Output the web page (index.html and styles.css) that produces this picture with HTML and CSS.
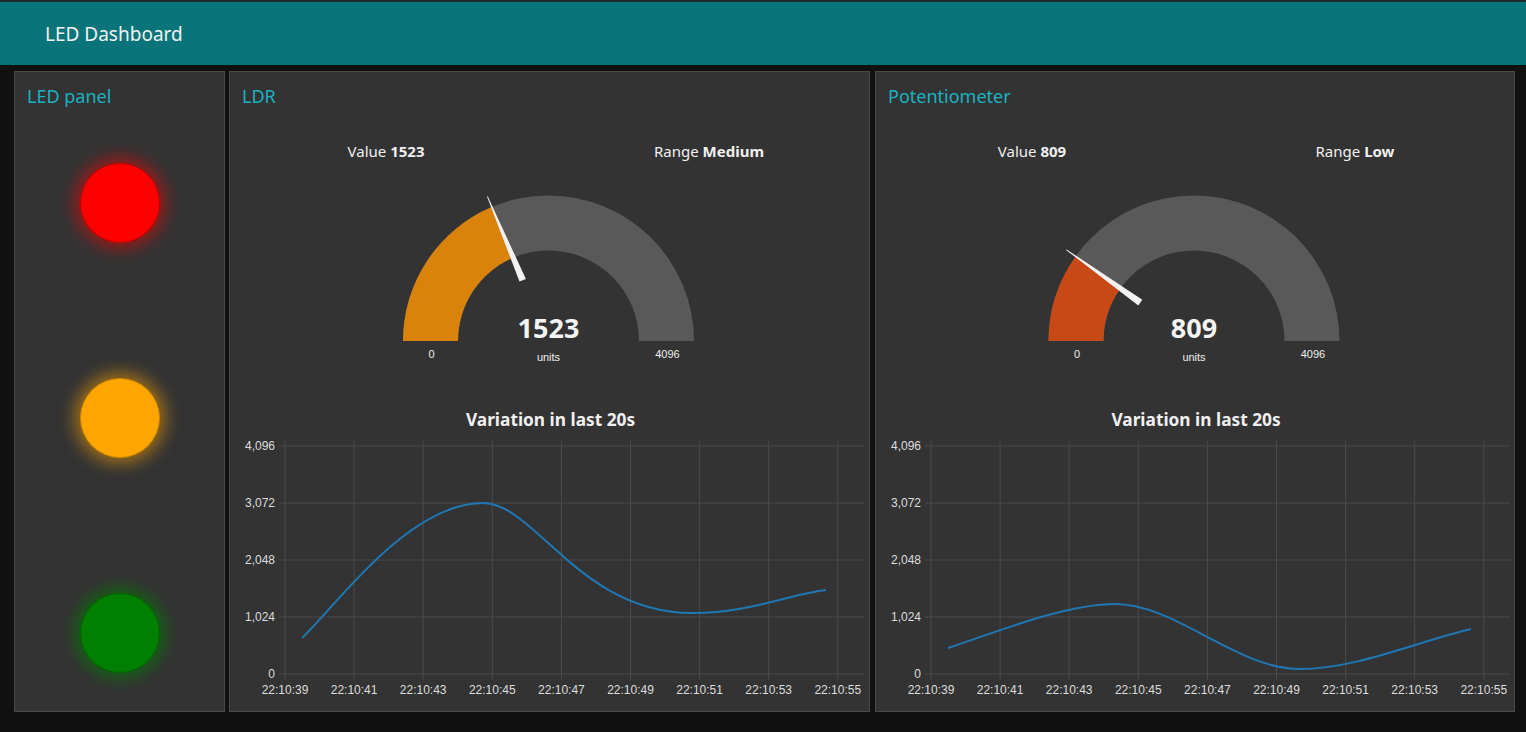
FILE: index.html
```html
<!DOCTYPE html>
<html>
<head>
<meta charset="utf-8">
<title>LED Dashboard</title>
<link rel="stylesheet" href="styles.css">
</head>
<body>
<header class="topbar"><span class="topbar-title">LED Dashboard</span></header>
<main class="board">
  <section class="card card-led">
    <h2 class="card-title">LED panel</h2>
    <div class="leds">
      <div class="led led-red"></div>
      <div class="led led-amber"></div>
      <div class="led led-green"></div>
    </div>
  </section>

  <section class="card card-ldr">
    <h2 class="card-title">LDR</h2>
    <div class="readouts">
      <div class="readout">Value <b>1523</b></div>
      <div class="readout">Range <b>Medium</b></div>
    </div>
    <svg class="gauge" width="639" height="206" viewBox="0 0 639 206">
      <g transform="translate(0.5,0)">
      <path class="g-bg" d="M172.5,177 A145.5,145.5 0 0 1 463.5,177 L408.5,177 A90.5,90.5 0 0 0 227.5,177 Z"/>
      <path class="g-fill-orange" d="M172.5,177 A145.5,145.5 0 0 1 261.15,43.07 L282.64,93.7 A90.5,90.5 0 0 0 227.5,177 Z"/>
      <polygon class="g-needle" points="256.5,32.4 257.2,32.2 295.4,114.9 289,117.6"/>
      <text class="g-value" x="318" y="174">1523</text>
      <text class="g-units" x="318" y="197">units</text>
      <text class="g-lim" x="201" y="194">0</text>
      <text class="g-lim" x="437" y="194">4096</text>
      </g>
    </svg>
    <h3 class="chart-title">Variation in last 20s</h3>
    <svg class="chart" width="639" height="280" viewBox="0 0 639 280">
      <g class="grid">
        <line x1="49" y1="15" x2="634" y2="15"/>
        <line x1="49" y1="72" x2="634" y2="72"/>
        <line x1="49" y1="129" x2="634" y2="129"/>
        <line x1="49" y1="186" x2="634" y2="186"/>
        <line x1="49" y1="243" x2="634" y2="243"/>
        <line x1="55" y1="10" x2="55" y2="249"/>
        <line x1="124.1" y1="10" x2="124.1" y2="249"/>
        <line x1="193.2" y1="10" x2="193.2" y2="249"/>
        <line x1="262.3" y1="10" x2="262.3" y2="249"/>
        <line x1="331.4" y1="10" x2="331.4" y2="249"/>
        <line x1="400.5" y1="10" x2="400.5" y2="249"/>
        <line x1="469.6" y1="10" x2="469.6" y2="249"/>
        <line x1="538.7" y1="10" x2="538.7" y2="249"/>
        <line x1="607.8" y1="10" x2="607.8" y2="249"/>
      </g>
      <g class="ylab">
        <text x="45" y="19">4,096</text>
        <text x="45" y="76">3,072</text>
        <text x="45" y="133">2,048</text>
        <text x="45" y="190">1,024</text>
        <text x="45" y="247">0</text>
      </g>
      <g class="xlab">
        <text x="55" y="263">22:10:39</text>
        <text x="124.1" y="263">22:10:41</text>
        <text x="193.2" y="263">22:10:43</text>
        <text x="262.3" y="263">22:10:45</text>
        <text x="331.4" y="263">22:10:47</text>
        <text x="400.5" y="263">22:10:49</text>
        <text x="469.6" y="263">22:10:51</text>
        <text x="538.7" y="263">22:10:53</text>
        <text x="607.8" y="263">22:10:55</text>
      </g>
      <path class="series" d="M72,207 C110,170 180,72 253,72 C305,72 350,182 462,182 C520,182 560,163 596,159"/>
    </svg>
  </section>

  <section class="card card-pot">
    <h2 class="card-title">Potentiometer</h2>
    <div class="readouts">
      <div class="readout">Value <b>809</b></div>
      <div class="readout">Range <b>Low</b></div>
    </div>
    <svg class="gauge" width="638" height="206" viewBox="0 0 638 206">
      <path class="g-bg" d="M172.5,177 A145.5,145.5 0 0 1 463.5,177 L408.5,177 A90.5,90.5 0 0 0 227.5,177 Z"/>
      <path class="g-fill-red" d="M172.5,177 A145.5,145.5 0 0 1 199.62,92.41 L244.37,124.38 A90.5,90.5 0 0 0 227.5,177 Z"/>
      <polygon class="g-needle" points="190,85.9 190.6,85.4 266.3,135.75 262.3,141.45"/>
      <text class="g-value" x="318" y="174">809</text>
      <text class="g-units" x="318" y="197">units</text>
      <text class="g-lim" x="201" y="194">0</text>
      <text class="g-lim" x="437" y="194">4096</text>
    </svg>
    <h3 class="chart-title">Variation in last 20s</h3>
    <svg class="chart" width="638" height="280" viewBox="0 0 638 280">
      <g class="grid">
        <line x1="49" y1="15" x2="634" y2="15"/>
        <line x1="49" y1="72" x2="634" y2="72"/>
        <line x1="49" y1="129" x2="634" y2="129"/>
        <line x1="49" y1="186" x2="634" y2="186"/>
        <line x1="49" y1="243" x2="634" y2="243"/>
        <line x1="55" y1="10" x2="55" y2="249"/>
        <line x1="124.1" y1="10" x2="124.1" y2="249"/>
        <line x1="193.2" y1="10" x2="193.2" y2="249"/>
        <line x1="262.3" y1="10" x2="262.3" y2="249"/>
        <line x1="331.4" y1="10" x2="331.4" y2="249"/>
        <line x1="400.5" y1="10" x2="400.5" y2="249"/>
        <line x1="469.6" y1="10" x2="469.6" y2="249"/>
        <line x1="538.7" y1="10" x2="538.7" y2="249"/>
        <line x1="607.8" y1="10" x2="607.8" y2="249"/>
      </g>
      <g class="ylab">
        <text x="45" y="19">4,096</text>
        <text x="45" y="76">3,072</text>
        <text x="45" y="133">2,048</text>
        <text x="45" y="190">1,024</text>
        <text x="45" y="247">0</text>
      </g>
      <g class="xlab">
        <text x="55" y="263">22:10:39</text>
        <text x="124.1" y="263">22:10:41</text>
        <text x="193.2" y="263">22:10:43</text>
        <text x="262.3" y="263">22:10:45</text>
        <text x="331.4" y="263">22:10:47</text>
        <text x="400.5" y="263">22:10:49</text>
        <text x="469.6" y="263">22:10:51</text>
        <text x="538.7" y="263">22:10:53</text>
        <text x="607.8" y="263">22:10:55</text>
      </g>
      <path class="series" d="M72,217 C120,201 190,173 239,173 C300,173 360,238 424,238 C480,238 540,211 595,198"/>
    </svg>
  </section>
</main>
</body>
</html>
```
FILE: styles.css
```css
* { box-sizing: border-box; }
html, body { margin: 0; padding: 0; }
body {
  background: #111111;
  font-family: "Noto Sans", "Open Sans", sans-serif;
  color: #ffffff;
  width: 1526px;
  height: 732px;
  overflow: hidden;
}
.topbar {
  height: 65px;
  background: #097479;
  border-top: 2px solid #1c2a2b;
  display: flex;
  align-items: center;
  padding-left: 45px;
}
.topbar-title {
  font-size: 19px;
  color: #f2f2f2;
  line-height: 24px;
  margin-top: 1px;
}
.board {
  display: flex;
  gap: 4px;
  padding: 6px 0 0 14px;
}
.card {
  flex: 0 0 auto;
  background: #333333;
  border: 1px solid #4a4a4a;
  height: 641px;
}
.card-led { width: 211px; }
.card-ldr { width: 641px; }
.card-pot { width: 640px; margin-left: 1px; }
.card-title {
  margin: 0;
  padding: 12px 0 0 12px;
  font-size: 18px;
  font-weight: 400;
  line-height: 24px;
  color: #1ab2c1;
}
.leds {
  display: flex;
  flex-direction: column;
  align-items: center;
  gap: 135px;
  padding-top: 55px;
}
.led {
  width: 80px;
  height: 80px;
  border-radius: 50%;
  margin-left: 1px;
}
.led-red { background: #ff0000; border: 1px solid #c80000; box-shadow: 0 0 16px 6px rgba(255,0,0,0.5); }
.led-amber { background: #ffa500; border: 1px solid #cc8400; box-shadow: 0 0 16px 6px rgba(255,165,0,0.5); }
.led-green { background: #008000; border: 1px solid #006400; box-shadow: 0 0 16px 6px rgba(0,128,0,0.6); }
.readouts {
  display: grid;
  grid-template-columns: 312px 312px;
  gap: 11px;
  margin-top: 31px;
  line-height: 24px;
  font-size: 15px;
}
.readout { text-align: center; color: #f0f0f0; }
.readout b { font-weight: 700; }
.gauge { display: block; margin-top: 1px; }
.g-bg { fill: #595959; }
.g-fill-orange { fill: #d9830b; }
.g-fill-red { fill: #c64916; }
.g-needle { fill: #f2f2f2; }
.g-value {
  font-family: "Noto Sans", sans-serif;
  font-weight: 700;
  font-size: 27px;
  fill: #f4f4f4;
  text-anchor: middle;
}
.g-units, .g-lim {
  font-family: "Liberation Sans", Arial, sans-serif;
  font-size: 11px;
  fill: #eeeeee;
  text-anchor: middle;
}
.chart-title {
  margin: 38px 0 0;
  text-align: center;
  font-size: 17.3px;
  font-weight: 700;
  line-height: 24px;
  color: #f0f0f0;
  padding-left: 2px;
}
.chart { display: block; margin-top: -1px; }
.grid line { stroke: #4b4b4b; stroke-width: 1; }
.ylab text {
  font-family: "Liberation Sans", Arial, sans-serif;
  font-size: 12px;
  fill: #dddddd;
  text-anchor: end;
}
.xlab text {
  font-family: "Liberation Sans", Arial, sans-serif;
  font-size: 12px;
  fill: #dddddd;
  text-anchor: middle;
}
.series { fill: none; stroke: #1f77b4; stroke-width: 2; }
```
